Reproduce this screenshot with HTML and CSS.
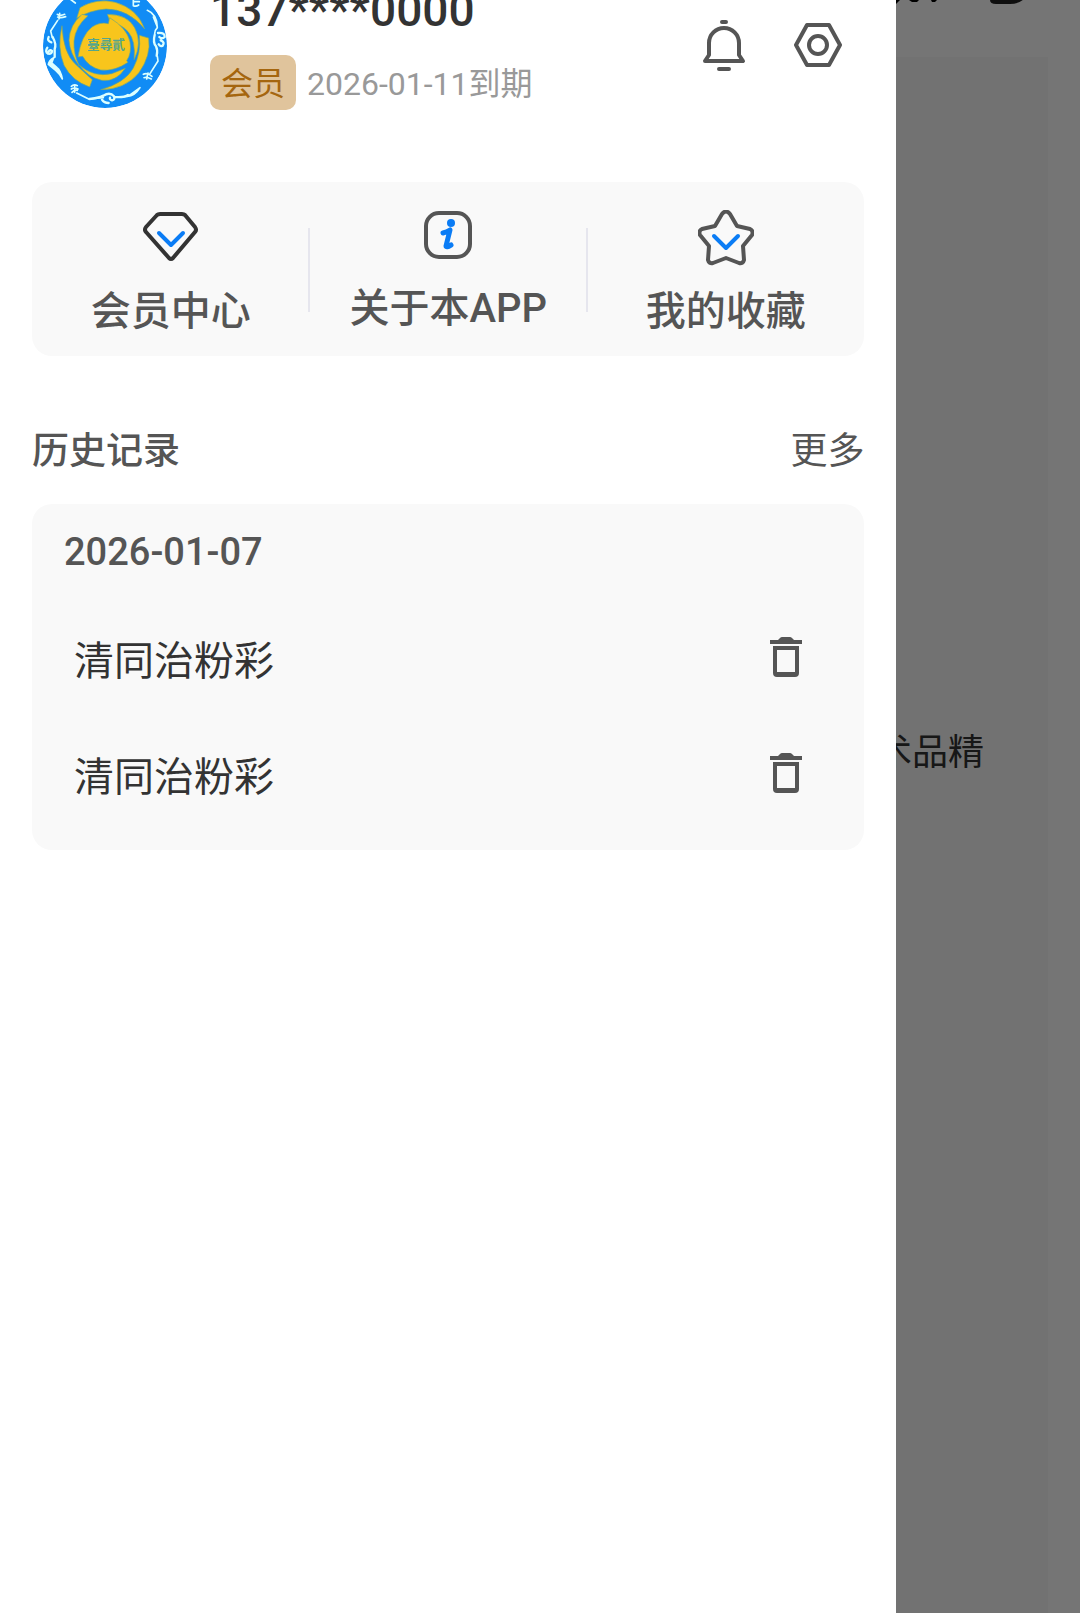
FILE: index.html
```
<!DOCTYPE html>
<html lang="zh-CN">

<head>
    <meta charset="UTF-8" />
    <meta name="viewport" content="width=device-width, initial-scale=1.0" />
    <title>我的</title>
    <link rel="stylesheet" href="styles.css">
</head>

<body>
    <!-- page under the drawer -->
    <main class="page">
        <div class="topbar">
            <svg class="topbar-marks" viewBox="0 0 152 10" aria-hidden="true">
                <path d="M0 0h4l-4 4zM13 0h10l-2 2h-5zM35 0h6l-2 2h-3z" fill="#000" />
                <path d="M96-8v8q0 2 4 2h14q10 0 16-8" fill="#555" stroke="#222" stroke-width="4" />
            </svg>
        </div>
        <div class="panel">
            <p>术品精</p>
        </div>
    </main>
    <div class="mask"></div>

    <aside class="drawer">
        <header class="profile">
            <svg class="avatar" viewBox="69 -49 372 372" role="img" aria-label="头像">
                <circle cx="255" cy="137" r="186" fill="#118cf5" />
                <g fill="#f8c51c" stroke="#6fa77c" stroke-width="2">
                    <path d="M170 54L180 22Q230-8 286 6Q352 25 374 86Q325 26 258 26Q208 30 170 54Z" />
                    <path d="M358 105L386 113Q394 165 357 217Q315 268 242 268Q315 248 340 203Q364 158 358 105Z" />
                    <path d="M126 76Q130 158 165 190Q188 212 217 238L209 260Q156 242 132 195Q110 140 126 76Z" />
                    <path d="M186 42Q148 75 147 120Q150 160 178 197Q160 160 162 122Q166 78 204 46Z" />
                    <path d="M262 42Q322 42 344 82Q368 128 342 178Q348 122 325 95Q305 72 270 64Z" />
                    <path d="M178 194Q220 232 275 220L316 204Q288 246 245 240Q202 230 178 194Z" />
                    <path d="M188 168L174 170Q184 105 216 80Q240 64 265 70L269 52Q322 84 330 125Q336 158 320 181L324 186Q283 214 242 209Q205 200 188 168Z" />
                </g>
                <text class="seal" x="258" y="147" text-anchor="middle">臺尋貳</text>
                <g fill="none" stroke="#dcffff" stroke-width="5" stroke-linecap="round" stroke-linejoin="round">
                    <path d="M112 42q8 6 22 0M113 50q8 4 24-1M119 39l-2 17M113 60L92 92L97 112" />
                    <path d="M86 110q-6 12 8 16M82 142q-8 12 2 18q12 2 12-8q-6-5-10 1M98 110q12 22 6 36v24" stroke-width="7" />
                    <path d="M101 172q-14 8-16 20l22 18q14 12 20 26q-5-26-16-34l-16-14z" fill="#dcffff" />
                    <path d="M382 30q30 12 30 52q-8 8-8 18M400 50l12 30" />
                    <path d="M404 104q-6 22 4 34q6 12 2 28M414 98q22-2 20 12q-8 8-16 0M422 120q14 6 6 16q-8 4-12-4" stroke-width="7" />
                    <path d="M412 168l2 14L390 220M370 222q12-6 26 6M372 232q8-4 22 4M384 218l-4 18" />
                    <path d="M154 258q8-8 18-2M154 266q10-6 20 0M156 276q8-8 16-6M164 254v22M170 278L206 296L250 292" />
                    <path d="M208 296q26-2 42-10q20-12 32 2q4 10-6 12q-8-2-6-8M246 298q6 10 20 10M284 290q30 2 40-6" stroke-width="7" />
                    <path d="M300 290q22 0 32-8l28-20q-16 26-38 26z" fill="#dcffff" />
                    <path d="M340-10v26q8 4 16-2M340 4h18M150-4l16 12" />
                </g>
            </svg>
            <div class="user">
                <strong class="phone">137****0000</strong>
                <div class="member">
                    <span class="badge">会员</span>
                    <span class="expires">2026-01-11到期</span>
                </div>
            </div>
            <div class="actions">
                <button type="button" aria-label="消息">
                    <svg viewBox="0 0 48 54" width="48" height="54">
                        <path d="M22 3h4M19 50h10" />
                        <path d="M9 36V24a15 15 0 0 1 30 0v12l4 6H5z" />
                    </svg>
                </button>
                <button type="button" aria-label="设置">
                    <svg viewBox="0 0 48 54" width="48" height="54">
                        <path d="M13 6h22l11 20-11 20H13L2 26z" />
                        <circle cx="24" cy="26" r="9" />
                    </svg>
                </button>
            </div>
        </header>

        <nav class="menu">
            <a href="#vip">
                <svg viewBox="0 0 56 56" width="56" height="56">
                    <path class="dark" d="M17 4h22q2 0 3 1l10 12q2 3 0 5L30 48q-2 2-4 0L3 22q-2-2 0-5L14 5q1-1 3-1z" />
                    <path class="blue" d="M16 23l12 12 12-12" />
                </svg>
                <span>会员中心</span>
            </a>
            <a href="#about">
                <svg viewBox="0 0 56 53" width="56" height="53">
                    <rect x="6" y="3" width="44" height="44" rx="13" />
                    <circle class="dot" cx="31" cy="13" r="4" />
                    <path class="info" d="M23 23q4-1 7-3l-4 16q0 2 5-1" />
                </svg>
                <span>关于本APP</span>
            </a>
            <a href="#favorites">
                <svg viewBox="0 0 56 56" width="56" height="56">
                    <path d="M24 4q4-5 8 0l7 12 13 3q4 2 2 6l-9 11 1 14q-1 4-5 3l-13-5-13 5q-4 1-5-3l1-14L2 25q-2-4 2-6l13-3z" />
                    <path class="blue" d="M16 26l12 12 12-12" />
                </svg>
                <span>我的收藏</span>
            </a>
        </nav>

        <section>
            <div class="section-head">
                <h2>历史记录</h2>
                <a href="#history">更多</a>
            </div>
            <div class="history">
                <h3>2026-01-07</h3>
                <ul>
                    <li>
                        <span>清同治粉彩</span>
                        <button type="button" aria-label="删除">
                            <svg viewBox="0 0 32 42" width="32" height="42">
                                <path d="M0 3h8l2-2q1-1 2-1h8q1 0 2 1l2 2h8v4H0z" />
                                <path fill-rule="evenodd" d="M3 9h26v27q0 4-4 4H7q-4 0-4-4zM7 13v22h18V13z" />
                            </svg>
                        </button>
                    </li>
                    <li>
                        <span>清同治粉彩</span>
                        <button type="button" aria-label="删除">
                            <svg viewBox="0 0 32 42" width="32" height="42">
                                <path d="M0 3h8l2-2q1-1 2-1h8q1 0 2 1l2 2h8v4H0z" />
                                <path fill-rule="evenodd" d="M3 9h26v27q0 4-4 4H7q-4 0-4-4zM7 13v22h18V13z" />
                            </svg>
                        </button>
                    </li>
                </ul>
            </div>
        </section>
    </aside>
</body>

</html>
```
FILE: styles.css
```
* {
    box-sizing: border-box;
}

body {
    margin: 0;
    min-height: 100vh;
    position: relative;
    overflow: hidden;
    background: #fff;
    color: #333;
    font-family: Roboto, "Noto Sans CJK SC", sans-serif;
}

a {
    color: #555;
    text-decoration: none;
}

button {
    padding: 0;
    border: none;
    background: none;
    cursor: pointer;
}

svg {
    display: block;
}

h2,
h3,
p,
ul {
    margin: 0;
    padding: 0;
}

/* page under the drawer */
.page {
    display: flex;
    flex-direction: column;
    min-height: 100vh;
    padding: 0 32px;
}

.topbar {
    display: flex;
    justify-content: flex-end;
    height: 57px;
}

.topbar-marks {
    width: 152px;
    height: 10px;
}

.panel {
    flex: 1;
    padding: 671px 64px 0;
    background: #f8f8f8;
    font-size: 36px;
    line-height: 50px;
    text-align: right;
}

.mask {
    position: absolute;
    inset: 0;
    background: rgba(0, 0, 0, 0.54);
}

.drawer {
    position: absolute;
    top: 0;
    bottom: 0;
    left: 0;
    width: 83%;
    padding: 0 32px;
    background: #fff;
}

/* profile */
.profile {
    display: flex;
    align-items: center;
    margin-top: -18px;
    padding: 0 22px 0 11px;
}

.avatar {
    width: 124px;
    height: 124px;
    border-radius: 50%;
}

.seal {
    font-size: 38px;
    font-weight: 700;
    fill: #55a58c;
}

.user {
    flex: 1;
    margin-left: 43px;
}

.phone {
    display: block;
    font-size: 46px;
    font-weight: 500;
    line-height: 56px;
}

.member {
    display: flex;
    align-items: center;
    gap: 11px;
    margin-top: 17px;
    font-size: 32px;
    line-height: 52px;
}

.badge {
    padding: 3px 11px 0;
    border-radius: 10px;
    background: #e0c49c;
    color: #a5660f;
}

.expires {
    padding-top: 3px;
    color: #999;
}

.actions {
    display: flex;
    gap: 46px;
}

.actions svg,
.menu svg {
    fill: none;
    stroke: #555;
    stroke-width: 4;
    stroke-linecap: round;
    stroke-linejoin: round;
}

/* menu */
.menu {
    display: flex;
    margin-top: 72px;
    padding: 28px 0 16px;
    border-radius: 20px;
    background: #f9f9f9;
}

.menu a {
    flex: 1;
    display: flex;
    flex-direction: column;
    align-items: center;
    gap: 18px;
    font-size: 40px;
    font-weight: 500;
    line-height: 56px;
    position: relative;
}

.menu a + a::before {
    content: "";
    position: absolute;
    left: -1px;
    top: 18px;
    width: 2px;
    height: 84px;
    background: #e6e6ee;
}

.menu .dark {
    stroke: #333;
}

.menu .blue,
.menu .info {
    stroke: #0a7cf5;
}

.menu .info {
    stroke-width: 5;
}

.menu .dot {
    fill: #0a7cf5;
    stroke: none;
}

/* history */
.section-head {
    display: flex;
    align-items: center;
    justify-content: space-between;
    margin: 68px 0 24px;
    color: #555;
    font-size: 37px;
    line-height: 56px;
}

.section-head h2 {
    font-size: inherit;
    font-weight: 500;
}

.history {
    padding: 20px 32px 18px;
    border-radius: 20px;
    background: #f9f9f9;
}

.history h3 {
    color: #555;
    font-size: 38px;
    font-weight: 500;
    line-height: 56px;
}

.history ul {
    margin-top: 20px;
    list-style: none;
}

.history li {
    display: flex;
    align-items: center;
    justify-content: space-between;
    height: 116px;
    padding: 0 30px 0 10px;
    font-size: 40px;
}

.history li svg {
    fill: #555;
}
```
